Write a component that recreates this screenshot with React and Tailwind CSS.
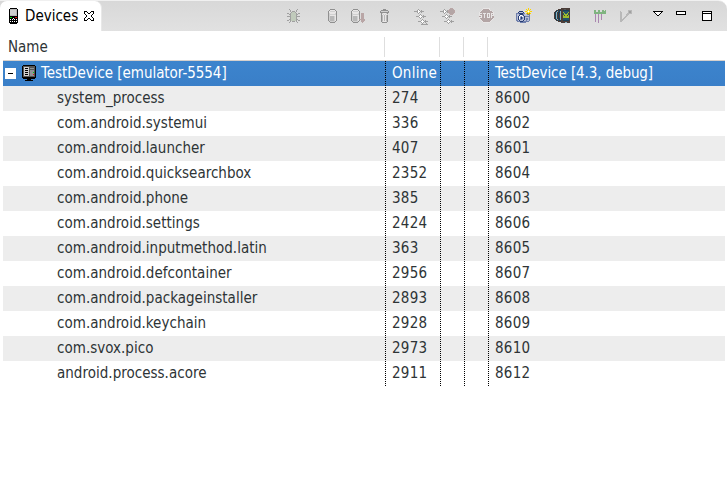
const palette = {
  k: '#000000', w: '#ffffff', g: '#a0a0a0', d: '#909090', l: '#d0d0d0', m: '#b8b8b8',
  b: '#c0cabb', r: '#b9a6a6', s: '#b3a5a5', e: '#e8e6e6', G: '#00d000', R: '#e01010',
  n: '#253c75', N: '#7080ac', v: '#b7bed6', y: '#ffd500', Y: '#f7ec88', o: '#bd9500',
  t: '#173f57', T: '#24536b', a: '#9dbd2d', c: '#87b4c5', x: '#4b3d38', f: '#7fb47f',
  p: '#aa86b0', q: '#555555', h: '#8f9396',
};

function Pixels({ map, className = '' }) {
  const w = Math.max(...map.map((row) => row.length));
  return (
    <svg className={`shrink-0 ${className}`} width={w} height={map.length} shapeRendering="crispEdges">
      {map.flatMap((row, y) =>
        [...row].map((ch, x) =>
          palette[ch] ? <rect key={`${x}-${y}`} x={x} y={y} width="1" height="1" fill={palette[ch]} /> : null
        )
      )}
    </svg>
  );
}

const phone = [
  '.kkkkkkk.', 'kmmmmmmmk', 'kllllllmk', 'kllllllmk', 'kllllllmk', 'kllllllmk', 'kllllllmk', 'kmmmmmmmk',
  'kkkkkkkkk', 'kGGkkkRRk', 'kkkkwkkkk', 'kwkwkwkwk', 'kkkkkkkkk', 'kwkwkwkwk', 'kkkkkkkkk', '.kkkkkkk.',
];
const close = [
  'kkk....kkk', 'k..k..k..k', 'k...kk...k', '.k......k.', '..k....k..', '..k....k..', '.k......k.', 'k...kk...k', 'k..k..k..k', 'kkk....kkk',
];
const bug = [
  '..g.......g..', '...g.....g...', '...g.ggg.g...', '....gbbbg....', 'gg.gbbbbbg.gg', '..ggbbbbbgg..', '...gbbbbbg...',
  'ggggbbbbbgggg', '...gbbbbbg...', '...gbbbbbg...', '..ggbbbbbgg..', 'gg.gbbbbbg.gg', '...g.ggg.g...', '..g.......g..',
];
const heap = [
  '..ddddd..', '.deeeeed.', 'dellllled', 'deeeeeeed', 'dleeeeeld', 'dllllllld', 'dleeeeeed', 'dlmmmmled', 'dlmmmmled', 'dlmmmmled', 'dlmmmmled', 'dlmmmmled', '.dllllld.', '..ddddd..',
];
const dump = [
  '..ddddd........', '.deeeeed.......', 'dellllled......', 'deeeeeeed......', 'dleeeeeld.rrr..', 'dllllllld.rrr..', 'dleeeeeed.rrr..', 'dlmmmmled.rrr..',
  'dlmmmmled.rrr..', 'dlmmmmled.rrr..', 'dlmmmmlerrrrrr.', 'dlmmmmled.rrrr.', '.dllllld..rrr..', '..ddddd....r...',
];
const trash = [
  '...ddd...', '.ddddddd.', 'dllllllld', 'ddddddddd', '.dleeeld.', '.delelel.', '.dmememd.', '.dmememd.', '.dmememd.', '.dmememd.', '.dmememd.', '.dmememd.', '.dleeeld.', '..ddddd..',
];
const threads = [
  '....g..........', '...gwg.g.......', 'ggggwwgggg.....', '...gwg.g.......', '....g..........', '......g........', '.....gwg.g.....', '..gggwwwgggg...',
  '.....gwg.g.....', '......g........', '........g......', '.......gwg.g...', '....gggwwwgggg.', '.......gwg.g...', '........g...g..', '.......ggggggg.',
];
const profiling = [
  '..........rrr..', '....g....rsssr.', '...gwg.grsssssr', 'ggggwwggrsssssr', '...gwg.grsssssr', '....g....rsssr.', '......g...rrr..', '.....gwg.g.....',
  '..gggwwwgggg...', '.....gwg.g.....', '......g........', '........g......', '.......gwg.g...', '....gggwwwgggg.', '.......gwg.g...', '........g......',
];
const stop = [
  '....eeeeeee....', '...esssssse....', '..esssssssse...', '.essssssssssse.', 'essssssssssssse', 'eeeseeeseeeseee', 'essssessesesese', 'eeessesseseseee',
  'ssessessesesess', 'eeessesseeesess', 'essssssssssssse', '.essssssssssse.', '..essssssssse..', '...essssssse...', '....eeeeeee....',
];
const camera = [
  '............y...', '..........y.y.y.', '...........yYy..', '...nnnn..yyYwYyy', '..nvvvvn...yYy..', 'NNNnnnnNN.yoyoy.', 'NvvNnnnNvvvNoN..', 'NvvnwwvnvvvvvN..',
  'NvnwvNwvnNNNNN..', 'NvnwNnNvnvvvvN..', 'NvnwNnNvnvNNvN..', 'NvnvNNvvnvNNvN..', 'NNvnvvvnvvNvvN..', '.NNNnnnNNNNNN...', '....NNNNNN......',
];
const screens = [
  '.......xxxxxxxxx', '....xxxxxxqqxxxx', '..xtxttxxttttttx', '.xtcxtcxxTTTTTTx', 'xtcxttcxxaTTTTax', 'xtcxtxcxxTaTTaTx', 'xtcxtxcxxTaaaaTx', 'xtcxtxcxxaxaaxax',
  'xtcxtxcxxaaaaaax', 'xtcxtxcxxaaaaaax', 'xtcxttcxxTTTTTTx', '.xtcxtcxxTTTTTTx', '..xtxttxxttttttx', '....xxxxxxxxxxxx', '.......xxxxccxxx',
];
const hierarchy = [
  'ff..ff..ff.f', 'ff..ff..ffff', 'ffffffffffff', 'ffffffffffff', '.p..p..p....', '.p..p..p....', '.p..p..p....', '.p..p..p....', '.p..p..p....', '.p..p..p....', '.p..p.......', '.p..p.......', '....p.......',
];
const trace = [
  '........mmmm', 'm.......mggm', 'mm......mggm', 'mm.....mmmmm', 'mm....mmm...', 'mm....mm....', 'mm...mm.....', 'mm..mm......', 'mm.mm.......', 'mmmm........', 'mmm.........', 'mm..........',
];
const triangle = ['kkkkkkkkkk', '.kwwwwwwk.', '..kwwwwk..', '...kwwk...', '....kk....'];
const minimize = ['kkkkkkkkkk', 'kwwwwwwwwk', 'kwwwwwwwwk', 'kkkkkkkkkk'];
const maximize = ['kkkkkkkkkk', 'kwwwwwwwwk', 'kkkkkkkkkk', ...Array(6).fill('kwwwwwwwwk'), 'kkkkkkkkkk'];
const monitor = [
  '.kkkkkkkkkkkk.', 'kqqqqqqqqqqqqk', 'kqlllllqqqqqqk', 'kqlkkklqhhhhqk', 'kqlllllqqqqqqk', 'kqlkkklqhhhhqk', 'kqlllllqhhhhqk', 'kqlkkklqhhhGqk', 'kqlllllqhhhhqk',
  'kqlkkklqhhhRqk', 'kqlllllqhhhhqk', 'kqqqqqqqqqqqqk', 'kkkkkkkkkkkkkk', '.kkkkkkkkkkkk.', '.....kkkk.....', '...kkkkkkkk...',
];

const tools = [
  [bug, 'ml-[185px] mt-[8px]'], [heap, 'ml-[28px] mt-[8px]'], [dump, 'ml-[14px] mt-[8px]'], [trash, 'ml-[14px] mt-[8px]'],
  [threads, 'ml-[25px] mt-[8px]'], [profiling, 'ml-[11px] mt-[7px]'], [stop, 'ml-[24px] mt-[7px]'], [camera, 'ml-[22px] mt-[7px]'],
  [screens, 'ml-[22px] mt-[7px]'], [hierarchy, 'ml-[24px] mt-[9px]'], [trace, 'ml-[14px] mt-[9px]'], [triangle, 'ml-[21px] mt-[10px]'],
  [minimize, 'ml-[13px] mt-[10px]'], [maximize, 'ml-[16px] mt-[10px]'],
];

const processes = [
  ['system_process', 274, 8600], ['com.android.systemui', 336, 8602], ['com.android.launcher', 407, 8601],
  ['com.android.quicksearchbox', 2352, 8604], ['com.android.phone', 385, 8603], ['com.android.settings', 2424, 8606],
  ['com.android.inputmethod.latin', 363, 8605], ['com.android.defcontainer', 2956, 8607],
  ['com.android.packageinstaller', 2893, 8608], ['com.android.keychain', 2928, 8609],
  ['com.svox.pico', 2973, 8610], ['android.process.acore', 2911, 8612],
];

const columns = 'grid grid-cols-[382px_55px_24px_24px_237px]';
const dots =
  'bg-[repeating-linear-gradient(to_bottom,#000_0px,#000_1px,transparent_1px,transparent_2px)] bg-[length:1px_100%] bg-no-repeat';

function Row({ className, name, status, port }) {
  return (
    <div className={`${columns} h-[25px] leading-[24px] whitespace-nowrap ${className}`}>
      <div className="flex">{name}</div>
      <div className="pl-[7px] tracking-[0.25px]">{status}</div>
      <div />
      <div />
      <div className="pl-[7px]">{port}</div>
    </div>
  );
}

export default function App() {
  return (
    <div className="h-[500px] w-[727px] overflow-hidden bg-white font-['DejaVu_Sans_Condensed','DejaVu_Sans',sans-serif] text-[15px] [font-stretch:condensed] text-[#2e3436]">
      <div className="flex h-[31px] items-start rounded-tr-[9px] border-t border-[#f0f0f0] bg-linear-to-b from-[#d8d8d8] to-[#e1e1e1]">
        <div className="flex h-[30px] w-[102px] shrink-0 rounded-t-[7px] border-r border-[#e8e8e8] bg-white text-black">
          <Pixels map={phone} className="mt-[7px] ml-[9px]" />
          <span className="ml-[7px] w-[53px] leading-[31px] whitespace-nowrap">Devices</span>
          <Pixels map={close} className="mt-[10px] ml-[6px]" />
        </div>
        {tools.map(([map, place], i) => (
          <Pixels key={i} map={map} className={place} />
        ))}
      </div>
      <div className="ml-[3px] w-[722px]">
        <div className={`${columns} h-[30px] border-b border-[#d6d1cd] leading-[32px]`}>
          <div className="pl-[5px]">Name</div>
          {[0, 1, 2, 3].map((i) => (
            <div key={i} className="mt-[6px] -ml-px h-[20px] border-l border-[#dedede]" />
          ))}
        </div>
        <div className="grid">
          <div className="col-start-1 row-start-1">
            <Row
              className="bg-linear-to-b from-[#3c84cd] to-[#3a7fc8] text-white"
              name={
                <>
                  <span className="mt-[7px] ml-[2px] flex h-[11px] w-[11px] items-center justify-center bg-white">
                    <span className="h-px w-[5px] bg-black" />
                  </span>
                  <Pixels map={monitor} className="mt-[4px] ml-[6px]" />
                  <span className="ml-[5px] tracking-[-0.04px]">TestDevice [emulator-5554]</span>
                </>
              }
              status="Online"
              port={<span className="tracking-[-0.08px]">TestDevice [4.3, debug]</span>}
            />
            {processes.map(([name, pid, port], i) => (
              <Row
                key={name}
                className={i % 2 ? 'bg-white' : 'bg-[#ededed]'}
                name={<span className="ml-[54px] tracking-[0.02px]">{name}</span>}
                status={pid}
                port={<span className="tracking-[0.25px]">{port}</span>}
              />
            ))}
          </div>
          <div className={`${columns} col-start-1 row-start-1`}>
            <div />
            <div className={dots} />
            <div className={dots} />
            <div className={dots} />
            <div className={dots} />
          </div>
        </div>
      </div>
    </div>
  );
}
